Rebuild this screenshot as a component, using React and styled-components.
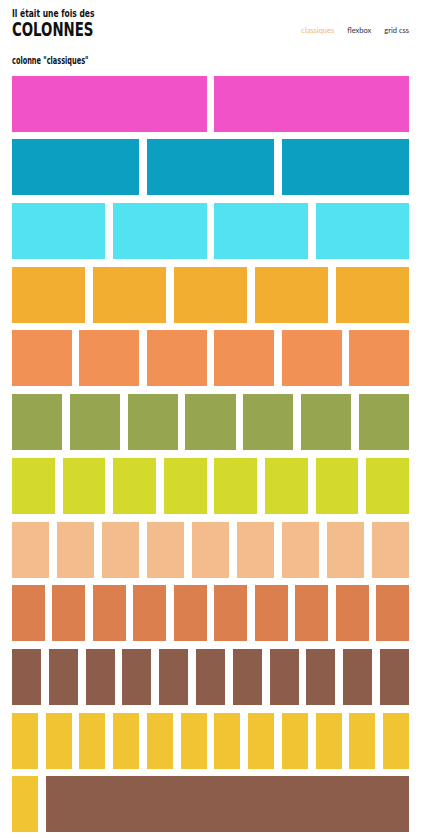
import React from 'react';
import styled, { createGlobalStyle } from 'styled-components';

const GlobalStyle = createGlobalStyle`
  html, body {
    margin: 0;
    padding: 0;
    background: #fff;
  }
`;

const GUTTER = 7.73;

// one entry per row: colour + how many equal columns
const rows = [
  { color: '#f152c8', cols: 2 },
  { color: '#0d9fc1', cols: 3 },
  { color: '#53e2f0', cols: 4 },
  { color: '#f1ae31', cols: 5 },
  { color: '#f29155', cols: 6 },
  { color: '#96a650', cols: 7 },
  { color: '#d3da2c', cols: 8 },
  { color: '#f3bc8d', cols: 9 },
  { color: '#db7f4e', cols: 10 },
  { color: '#8b5d4a', cols: 11 },
  { color: '#f1c434', cols: 12 },
];

export default function App() {
  return (
    <Page>
      <GlobalStyle />
      <Header>
        <Title>
          <Kicker>Il était une fois des</Kicker>
          <Big>COLONNES</Big>
        </Title>
        <Nav>
          <NavLink $active>classiques</NavLink>
          <NavLink>flexbox</NavLink>
          <NavLink>grid css</NavLink>
        </Nav>
      </Header>

      <SectionTitle>colonne "classiques"</SectionTitle>

      {rows.map((r, i) => (
        <Row key={i}>
          {Array.from({ length: r.cols }).map((_, j) => (
            <Block key={j} $color={r.color} />
          ))}
        </Row>
      ))}

      <Row>
        <Block $color="#f1c434" $span={1} />
        <Block $color="#8b5d4a" />
      </Row>
    </Page>
  );
}

const Page = styled.div`
  width: 397px;
  padding: 0 19px 0 12px;
`;

const Header = styled.header`
  display: flex;
  align-items: flex-end;
  justify-content: space-between;
  padding-top: 8.5px;
`;

// no Oswald offline: condensed DejaVu squeezed a bit more
const Condensed = styled.div`
  font-family: "DejaVu Sans Condensed", "DejaVu Sans", sans-serif;
  font-weight: bold;
  color: #111;
  white-space: nowrap;
  transform-origin: left top;
`;

const Title = styled.div``;

const Kicker = styled(Condensed)`
  font-size: 10px;
  line-height: 10px;
  transform: scaleX(0.84);
`;

const Big = styled(Condensed)`
  font-size: 19px;
  line-height: 21px;
  transform: scaleX(0.78);
`;

const Nav = styled.nav`
  display: flex;
  gap: 13px;
  padding-bottom: 4px;
`;

const NavLink = styled.a`
  font-family: Lato, "Open Sans", sans-serif;
  font-size: 7.5px;
  line-height: 10px;
  color: ${p => (p.$active ? '#f6bb5e' : '#2c2c48')};
  cursor: pointer;
`;

const SectionTitle = styled(Condensed).attrs({ as: 'h2' })`
  margin: 15.5px 0 8.5px;
  font-size: 10px;
  line-height: 12px;
  transform: scaleX(0.73);
`;

const Row = styled.div`
  display: flex;
  gap: ${GUTTER}px;
  margin-bottom: ${GUTTER}px;
`;

const Block = styled.div`
  height: 56px;
  background: ${p => p.$color};
  ${p =>
    p.$span
      ? `flex: 0 0 calc((100% - ${11 * GUTTER}px) / 12);`
      : 'flex: 1 1 0;'}
`;
